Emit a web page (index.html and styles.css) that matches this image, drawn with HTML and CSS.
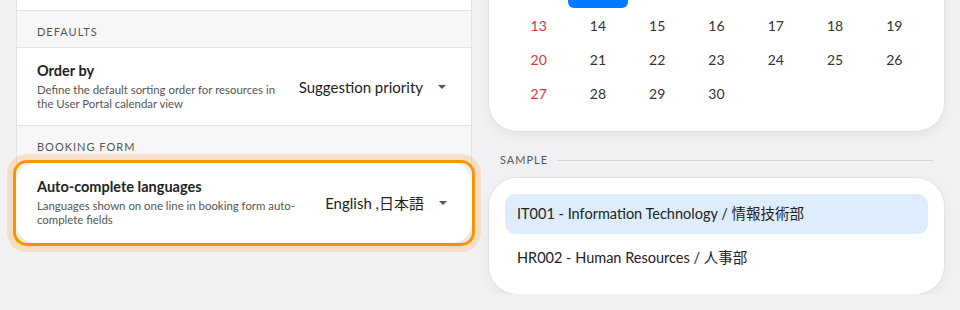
FILE: index.html
```html
<!DOCTYPE html>
<html lang="en">
<head>
    <meta charset="UTF-8">
    <meta name="viewport" content="width=device-width, initial-scale=1.0">
    <title>Resource settings</title>
    <link rel="stylesheet" href="styles.css">
</head>
<body>
    <div class="page">
        <!-- settings column -->
        <div class="settings">
            <div class="row-tail"></div>

            <div class="section-title">Defaults</div>
            <div class="setting">
                <div class="setting-text">
                    <div class="setting-name">Order by</div>
                    <div class="setting-desc">Define the default sorting order for resources in the User Portal calendar view</div>
                </div>
                <div class="select">
                    <span>Suggestion priority</span>
                    <span class="caret"></span>
                </div>
            </div>

            <div class="section-title booking">Booking form</div>
            <div class="focus-ring">
                <div class="setting focus-card">
                    <div class="setting-text">
                        <div class="setting-name">Auto-complete languages</div>
                        <div class="setting-desc">Languages shown on one line in booking form auto-complete fields</div>
                    </div>
                    <div class="select">
                        <span>English ,日本語</span>
                        <span class="caret"></span>
                    </div>
                </div>
            </div>
        </div>

        <!-- preview column -->
        <div class="preview">
            <div class="calendar">
                <div class="cal-grid" id="calGrid"></div>
            </div>

            <div class="sample-label">
                <span>Sample</span>
                <span class="rule"></span>
            </div>
            <div class="sample-card">
                <div class="sample-item active">IT001 - Information Technology / 情報技術部</div>
                <div class="sample-item">HR002 - Human Resources / 人事部</div>
            </div>
        </div>
    </div>

    <script>
        // 日历: 2025年4月, 只画可见的几行
        var grid = document.getElementById('calGrid');
        var days = [6, 7, 8, 9, 10, 11, 12];
        for (var d = 13; d <= 30; d++) days.push(d);
        days.forEach(function (day, i) {
            var cell = document.createElement('div');
            cell.className = 'cal-day';
            if (i % 7 === 0) cell.classList.add('sunday');
            if (day === 7) cell.classList.add('selected');
            cell.textContent = day;
            grid.appendChild(cell);
        });
    </script>
</body>
</html>
```

FILE: styles.css
```css
body {
    margin: 0;
    background-color: #f1f1f3;
    font-family: Lato, "Noto Sans CJK JP", sans-serif;
    color: #222;
}

.page {
    display: grid;
    grid-template-columns: 456px 455px;
    column-gap: 17px;
    padding: 0 16px;
}

/* left column */
.settings {
    border-left: 1px solid #e2e2e5;
    border-right: 1px solid #e2e2e5;
    background-color: #f7f7f8;
    align-self: start;
}

.row-tail {
    height: 10px;
    background-color: #fff;
    border-bottom: 1px solid #e2e2e5;
}

.section-title {
    height: 36px;
    line-height: 42px;
    padding-left: 20px;
    font-size: 11px;
    letter-spacing: 1px;
    text-transform: uppercase;
    color: #555;
    border-bottom: 1px solid #e2e2e5;
}

.section-title.booking {
    border-bottom: none;
    height: 35px;
}

.setting {
    display: flex;
    align-items: center;
    background-color: #fff;
    padding: 14px 25px 14px 20px;
    border-bottom: 1px solid #e2e2e5;
}

.setting-text {
    flex: 1;
    margin-right: 18px;
}

.setting-name {
    font-size: 14.5px;
    font-weight: 700;
    line-height: 18px;
    color: #222;
}

.setting-desc {
    margin-top: 3px;
    font-size: 11.4px;
    line-height: 14px;
    color: #555;
}

.select {
    display: flex;
    align-items: center;
    gap: 15px;
    font-size: 15px;
    color: #222;
    white-space: nowrap;
}

.caret {
    width: 0;
    height: 0;
    border-left: 4px solid transparent;
    border-right: 4px solid transparent;
    border-top: 4px solid #555;
}

.focus-ring {
    margin: -1px -4px 0;
    border: 3px solid #ff9500;
    border-radius: 14px;
    box-shadow: 0 0 0 6px rgba(255, 160, 40, 0.22);
    background-color: #f1f1f3;
}

.focus-card {
    border-bottom: none;
    border-radius: 20px;
    padding: 15px 25px 16px 21px;
    box-shadow: 0 2px 5px rgba(0, 0, 0, 0.08);
}

/* right column */
.calendar {
    margin-top: -26px;
    background-color: #fff;
    border-radius: 0 0 28px 28px;
    padding: 0 20px 21px;
    box-shadow: 0 4px 14px rgba(0, 0, 0, 0.06), 0 0 0 1px rgba(0, 0, 0, 0.03);
}

.cal-grid {
    display: grid;
    grid-template-columns: repeat(7, 1fr);
    grid-auto-rows: 34px;
}

.cal-day {
    display: flex;
    align-items: center;
    justify-content: center;
    font-size: 14px;
    color: #333;
}

.cal-day.sunday {
    color: #d9363e;
}

.cal-day.selected {
    background-color: #007aff;
    color: #fff;
    border-radius: 6px;
}

.sample-label {
    display: flex;
    align-items: center;
    gap: 9px;
    margin: 22px 11px 11px;
    font-size: 11px;
    letter-spacing: 1px;
    text-transform: uppercase;
    color: #555;
    line-height: 14px;
}

.rule {
    flex: 1;
    height: 1px;
    background-color: #d4d4d8;
}

.sample-card {
    background-color: #fff;
    border-radius: 28px;
    padding: 16px;
    display: flex;
    flex-direction: column;
    gap: 4px;
    box-shadow: 0 4px 14px rgba(0, 0, 0, 0.06), 0 0 0 1px rgba(0, 0, 0, 0.04);
}

.sample-item {
    height: 40px;
    line-height: 40px;
    padding: 0 12px;
    font-size: 14.5px;
    border-radius: 10px;
    color: #222;
}

.sample-item.active {
    background-color: #deedfc;
}
```
